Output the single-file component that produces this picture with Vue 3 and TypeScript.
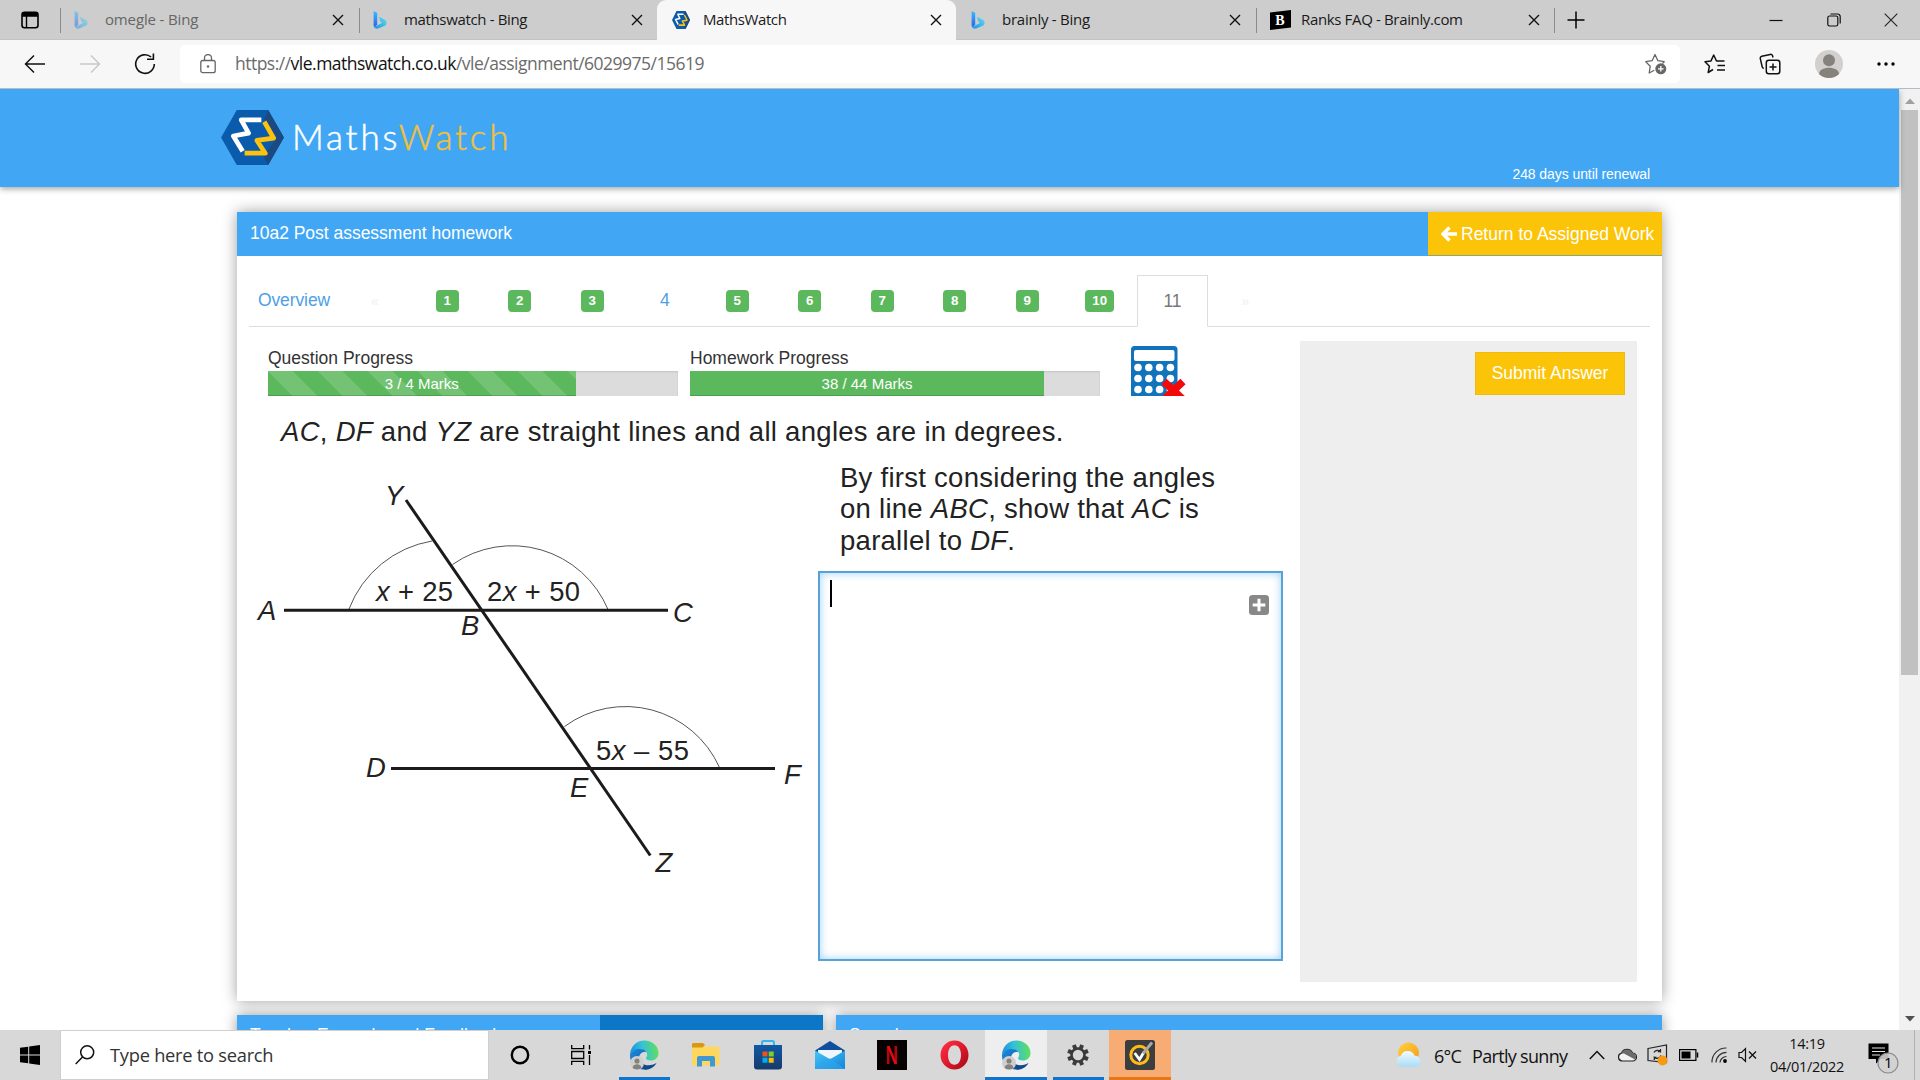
<script setup lang="ts">
interface BrowserTab {
  title: string
  icon: 'bing' | 'mw' | 'brainly'
  active?: boolean
  faded?: boolean
  divider?: boolean
  spacing: number
}

const tabs: BrowserTab[] = [
  { title: 'omegle - Bing', icon: 'bing', faded: true, divider: true, spacing: -0.15 },
  { title: 'mathswatch - Bing', icon: 'bing', divider: true, spacing: -0.35 },
  { title: 'MathsWatch', icon: 'mw', active: true, spacing: -0.4 },
  { title: 'brainly - Bing', icon: 'bing', spacing: -0.25 },
  { title: 'Ranks FAQ - Brainly.com', icon: 'brainly', divider: true, spacing: -0.35 },
]

interface Question {
  n: number
  done: boolean
  current?: boolean
}

const questions: Question[] = Array.from({ length: 11 }, (_, i) => ({
  n: i + 1,
  done: i + 1 !== 4 && i + 1 !== 11,
  current: i + 1 === 11,
}))

const progress = [
  { label: 'Question Progress', got: 3, total: 4, striped: true },
  { label: 'Homework Progress', got: 38, total: 44, striped: false },
]

const keys = [0, 1, 2].flatMap((r) => [0, 1, 2, 3].map((c) => ({ x: 7 + c * 10.8, y: 21.5 + r * 11 })))
const teeth = [0, 45, 90, 135, 180, 225, 270, 315]
</script>

<template>
  <div class="screen">
    <svg class="defs" width="0" height="0">
      <defs>
        <linearGradient id="bingA" x1="0" y1="0" x2="0" y2="1">
          <stop offset="0" stop-color="#37bdff" /><stop offset="1" stop-color="#2a5fe8" />
        </linearGradient>
        <linearGradient id="bingB" x1="0" y1="1" x2="1" y2="0">
          <stop offset="0" stop-color="#1b8ff0" /><stop offset="1" stop-color="#5fe0e8" />
        </linearGradient>
        <linearGradient id="edgeTop" x1="0" y1="0.6" x2="1" y2="0.5">
          <stop offset="0" stop-color="#1a8fdd" /><stop offset="0.45" stop-color="#35c1d8" /><stop offset="1" stop-color="#5fe05a" />
        </linearGradient>
        <linearGradient id="edgeMid" x1="0" y1="0" x2="1" y2="1">
          <stop offset="0" stop-color="#1c8fe0" /><stop offset="1" stop-color="#0c4f9c" />
        </linearGradient>
        <linearGradient id="storeBg" x1="0" y1="0" x2="0" y2="1">
          <stop offset="0" stop-color="#0f5aa8" /><stop offset="1" stop-color="#173a6b" />
        </linearGradient>
        <linearGradient id="mailBg" x1="0" y1="0" x2="1" y2="1">
          <stop offset="0" stop-color="#45c6f7" /><stop offset="1" stop-color="#1483d8" />
        </linearGradient>
        <linearGradient id="operaBg" x1="0" y1="0" x2="1" y2="1">
          <stop offset="0" stop-color="#ff3347" /><stop offset="0.5" stop-color="#e0192d" /><stop offset="1" stop-color="#9c0a14" />
        </linearGradient>
        <linearGradient id="sunBg" x1="0" y1="0" x2="1" y2="1">
          <stop offset="0" stop-color="#ffd23e" /><stop offset="1" stop-color="#f59a1b" />
        </linearGradient>
        <linearGradient id="cloudBg" x1="0" y1="0" x2="0" y2="1">
          <stop offset="0" stop-color="#f2fbff" /><stop offset="1" stop-color="#a9dcf5" />
        </linearGradient>
        <symbol id="edge" viewBox="0 0 30 30">
          <path d="M1 14.5C1.600 6.500 7.500.5 15.300.5 23.500.5 29.500 6.300 29.500 13c0 4.600-3.600 7.600-7.600 7.600-3.200 0-5-1.200-5-2.300 0-.8 1.300-1.400 1.300-3.500 0-3-2.800-5.400-7-5.400-5 0-8.600 2.400-10.200 5.100z" fill="url(#edgeTop)" />
          <path d="M1 14.500c1.600-3.600 5.300-5.600 9.700-5.600 3.300 0 5.500 1.200 6.600 2.900-4.600-.4-7.300 2.600-7.300 6.600 0 5 4 10.100 9.600 10.400-1.500.6-3 .8-4.500.8C7 29.600.4 23 1 14.500z" fill="url(#edgeMid)" />
          <path d="M12 17c-1.300 5 2.400 8.300 7.400 8.300 3.600 0 6.300-1.300 8.200-2.600-2 4.100-6.300 7-11.300 7-5.200-1.600-7.600-8.300-4.300-12.700z" fill="#114a8b" />
        </symbol>
        <symbol id="person" viewBox="0 0 16 16">
          <circle cx="8" cy="8" r="8" fill="#cfcfcf" />
          <circle cx="8" cy="5.800" r="2.900" fill="#85817d" />
          <path d="M3 13.500c0-5.500 10-5.500 10 0-2 2.600-8 2.600-10 0z" fill="#85817d" />
        </symbol>
        <symbol id="mwmark" viewBox="0 0 64 56">
          <path d="M16 0h32l16 28-16 28H16L0 28z" fill="#0a5bab" />
          <path d="M48 0l16 28-16 28-5-9 14-19L44 9z" fill="#1c4a80" />
          <path d="M41 10H20.500L28 23.500 12.500 26.500 22 42" fill="none" stroke="#fff" stroke-width="4.800" stroke-linejoin="round" />
          <path d="M44 12L53.500 28.600 36.500 31 45 44H24" fill="none" stroke="#fdc10e" stroke-width="4.800" stroke-linejoin="round" />
        </symbol>
      </defs>
    </svg>

    <!-- Tab strip -->
    <div class="tabstrip">
      <div class="tabmenu">
        <svg width="18" height="18" viewBox="0 0 18 18"><rect x="1" y="1.200" width="16" height="15.600" rx="2.500" fill="none" stroke="#000" stroke-width="1.600" /><path d="M1 5.800V3.500A2.500 2.500 0 0 1 3.500 1h11A2.500 2.500 0 0 1 17 3.500v2.300z" /><path d="M5.500 5v12" stroke="#000" stroke-width="1.400" /></svg>
      </div>
      <div v-for="t in tabs" :key="t.title" class="tab" :class="{ active: t.active, divided: t.divider, faded: t.faded }">
        <span class="favicon">
          <svg v-if="t.icon === 'bing'" width="14" height="18" viewBox="0 0 14 18">
            <path d="M.6 0l3.600 1.700v11.600L1.900 16.500.6 14.700z" fill="url(#bingA)" />
            <path d="M5.800 5.800l6.400 3.100c1.800 1.200 1.900 4 .2 5.500l-7.200 3.200c-1.900.6-4.300-.5-4.600-2.900 1.200 1 2.500.5 3.600-.2l5-2.800-1.700-1z" fill="url(#bingB)" />
          </svg>
          <svg v-else-if="t.icon === 'mw'" width="18" height="18" viewBox="0 0 64 56" preserveAspectRatio="none"><use href="#mwmark" /></svg>
          <svg v-else width="21" height="20" viewBox="0 0 21 20"><path d="M0 2.500L21 0v17.500L0 20z" /><text x="5.200" y="15" class="brainly">B</text></svg>
        </span>
        <span class="tabtitle" :style="{ letterSpacing: t.spacing + 'px' }">{{ t.title }}</span>
        <svg class="close" width="12" height="12" viewBox="0 0 12 12"><path d="M1 1l10 10M11 1L1 11" stroke="#111" stroke-width="1.400" /></svg>
      </div>
      <div class="newtab"><svg width="18" height="18" viewBox="0 0 18 18"><path d="M9 .5v17M.5 9h17" stroke="#000" stroke-width="1.500" /></svg></div>
      <div class="winctl">
        <svg width="14" height="14" viewBox="0 0 14 14"><path d="M.5 7.500h13" stroke="#111" stroke-width="1.200" /></svg>
        <svg width="14" height="14" viewBox="0 0 14 14"><rect x=".8" y="3" width="10" height="10" rx="1.800" fill="none" stroke="#111" stroke-width="1.200" /><path d="M3.500 1h7A2.600 2.600 0 0 1 13.200 3.600V10.500" fill="none" stroke="#111" stroke-width="1.200" /></svg>
        <svg width="14" height="14" viewBox="0 0 14 14"><path d="M.7.700l12.600 12.600M13.300.700L.7 13.300" stroke="#222" stroke-width="1.100" /></svg>
      </div>
    </div>

    <!-- Toolbar -->
    <div class="toolbar">
      <div class="nav">
        <svg width="22" height="20" viewBox="0 0 22 20"><path d="M21 10H2M10 1.500L1.500 10l8.500 8.500" fill="none" stroke="#111" stroke-width="1.500" /></svg>
        <svg width="22" height="20" viewBox="0 0 22 20"><path d="M1 10h19M12 1.500l8.500 8.500-8.500 8.500" fill="none" stroke="#c9c9c9" stroke-width="1.500" /></svg>
        <svg width="22" height="22" viewBox="0 0 22 22"><path d="M20.300 11a9.300 9.300 0 1 1-3.200-7" fill="none" stroke="#111" stroke-width="1.600" /><path d="M13 6.200h6.400V.5" fill="none" stroke="#111" stroke-width="1.600" /></svg>
      </div>
      <div class="address">
        <svg width="16" height="20" viewBox="0 0 16 20"><rect x=".8" y="6.500" width="14.400" height="12.200" rx="2" fill="none" stroke="#666" stroke-width="1.300" /><path d="M4.500 6.500V4a3.500 3.500 0 0 1 7 0v2.500" fill="none" stroke="#666" stroke-width="1.300" /><circle cx="8" cy="12.500" r="1.200" fill="#666" /></svg>
        <span class="url">https://<b>vle.mathswatch.co.uk</b>/vle/assignment/6029975/15619</span>
        <svg class="addstar" width="22" height="22" viewBox="0 0 22 22"><path d="M9.300 17.200L4.200 20l1-6.700L.8 8.700l6.300-1L10 1.500l2.900 6.200 6.300 1-1.700 1.800" fill="none" stroke="#666" stroke-width="1.300" stroke-linejoin="round" /><circle cx="15.800" cy="15.800" r="5.500" fill="#666" /><path d="M15.800 13v5.600M13 15.800h5.600" stroke="#fff" stroke-width="1.300" /></svg>
      </div>
      <div class="tools">
        <svg width="22" height="20" viewBox="0 0 22 20"><path d="M9 15.500L4.200 18.500l1.200-6.300L1 7.700l6-.8L9.700 1l2.800 6h8M13.500 11.500h7.500M13 16h8" fill="none" stroke="#111" stroke-width="1.500" stroke-linejoin="round" /></svg>
        <svg width="22" height="22" viewBox="0 0 22 22"><rect x="7.300" y="7.300" width="13.500" height="13.500" rx="2.500" fill="none" stroke="#111" stroke-width="1.500" /><path d="M14 10.500v7M10.500 14h7" stroke="#111" stroke-width="1.500" /><path d="M14 4.500l-.4-1.600a2 2 0 0 0-2.400-1.500L2.800 3.300A2 2 0 0 0 1.300 5.700l1.900 8.100a2 2 0 0 0 1.700 1.500" fill="none" stroke="#111" stroke-width="1.500" /></svg>
        <svg width="28" height="28" viewBox="0 0 28 28"><circle cx="14" cy="14" r="14" fill="#d2d0ce" /><circle cx="14" cy="10.300" r="6" fill="#85817d" /><path d="M4 24c0-8.500 20-8.500 20 0-5 5.300-15 5.300-20 0z" fill="#85817d" /></svg>
        <svg width="18" height="4" viewBox="0 0 18 4"><circle cx="2" cy="2" r="1.700" /><circle cx="9" cy="2" r="1.700" /><circle cx="16" cy="2" r="1.700" /></svg>
      </div>
    </div>

    <!-- Page -->
    <div class="viewport">
      <div class="page">
        <header class="site">
          <div class="logo">
            <svg width="63" height="55" viewBox="0 0 64 56"><use href="#mwmark" /></svg>
            <span class="wordmark">Maths<i>Watch</i></span>
          </div>
          <span class="renewal">248 days until renewal</span>
        </header>

        <section class="card">
          <div class="cardhead">
            <span class="cardtitle">10a2 Post assessment homework</span>
            <button class="return">
              <svg width="16" height="16" viewBox="0 0 16 16"><path d="M8.500 1.500L2 8l6.500 6.500M2.500 8H16" fill="none" stroke="#fff" stroke-width="3.400" /></svg>
              <span>Return to Assigned Work</span>
            </button>
          </div>

          <nav class="qnav">
            <a class="overview">Overview</a>
            <a class="step">«</a>
            <a v-for="q in questions" :key="q.n" class="q" :class="{ current: q.current }">
              <span :class="{ badge: q.done }">{{ q.n }}</span>
            </a>
            <a class="step next">»</a>
          </nav>

          <div class="body">
            <div class="work">
              <div class="progressrow">
                <div v-for="p in progress" :key="p.label" class="progress">
                  <label>{{ p.label }}</label>
                  <div class="bar">
                    <div class="fill" :class="{ striped: p.striped }" :style="{ width: (p.got / p.total) * 100 + '%' }">{{ p.got }} / {{ p.total }} Marks</div>
                  </div>
                </div>
                <svg class="calc" width="56" height="50" viewBox="0 0 56 50">
                  <rect width="46.500" height="54" rx="3.500" fill="#1273bd" />
                  <rect x="3" y="4" width="40.500" height="11" rx="2" fill="#fff" />
                  <circle v-for="(k, i) in keys" :key="i" :cx="k.x" :cy="k.y" r="3.800" fill="#fff" />
                  <path d="M33 35.500l19 18M52 35.500l-19 18" stroke="#f40808" stroke-width="7.500" />
                </svg>
              </div>

              <p class="statement"><em>AC</em>, <em>DF</em> and <em>YZ</em> are straight lines and all angles are in degrees.</p>

              <div class="split">
                <svg class="diagram" width="569" height="440" viewBox="249 448 569 440">
                  <g fill="none" stroke="#555" stroke-width="1">
                    <path d="M349 609A108 108 0 0 1 432 541" />
                    <path d="M452.500 564.500A104 104 0 0 1 608 609.500" />
                    <path d="M564.500 726.500A103 103 0 0 1 719.500 767.500" />
                  </g>
                  <g stroke="#1c1a1b" stroke-width="3">
                    <path d="M284 610.300H668M391 768.500H775" />
                    <path d="M406 500L650.300 855.500" />
                  </g>
                  <g class="lbl">
                    <text x="258" y="620">A</text><text x="673" y="622">C</text><text x="461" y="635.300">B</text>
                    <text x="385" y="505">Y</text><text x="655.500" y="872.300">Z</text><text x="366" y="777.300">D</text>
                    <text x="784" y="784">F</text><text x="570" y="796.700">E</text>
                    <text x="376" y="601" textLength="77">x<tspan class="up"> + 25</tspan></text>
                    <text x="487" y="601" textLength="93"><tspan class="up">2</tspan>x<tspan class="up"> + 50</tspan></text>
                    <text x="596" y="760" textLength="93"><tspan class="up">5</tspan>x<tspan class="up"> – 55</tspan></text>
                  </g>
                </svg>
                <div class="answercol">
                  <p class="prompt">By first considering the angles<br />on line <em>ABC</em>, show that <em>AC</em> is<br />parallel to <em>DF</em>.</p>
                  <div class="answer">
                    <span class="caret"></span>
                    <svg class="plus" width="20" height="20" viewBox="0 0 20 20"><rect width="20" height="20" rx="3.500" fill="#888" /><path d="M10 3.700v12.600M3.700 10h12.600" stroke="#fff" stroke-width="3" /></svg>
                  </div>
                </div>
              </div>
            </div>
            <aside class="side"><button class="submit">Submit Answer</button></aside>
          </div>
        </section>

        <div class="lower">
          <div class="lowcard left"><span>Teacher Example and Feedback</span><div class="dark"></div></div>
          <div class="lowcard right"><span>Search</span></div>
        </div>
      </div>
      <div class="scroll">
        <svg width="10" height="6" viewBox="0 0 10 6"><path d="M0 6l5-5.500L10 6z" fill="#a0a0a0" /></svg>
        <div class="thumb"></div>
        <svg class="down" width="10" height="6" viewBox="0 0 10 6"><path d="M0 0l5 5.500L10 0z" fill="#505050" /></svg>
      </div>
    </div>

    <!-- Taskbar -->
    <div class="taskbar">
      <div class="start"><svg width="20" height="20" viewBox="0 0 20 20"><path d="M0 2.800l8.200-1.100v7.800H0zM9.200 1.500L20 0v9.500H9.200zM0 10.500h8.200v7.800L0 17.200zM9.200 10.500H20V20L9.200 18.500z" /></svg></div>
      <div class="search">
        <svg width="20" height="20" viewBox="0 0 20 20"><circle cx="12.200" cy="7.300" r="6.500" fill="none" stroke="#111" stroke-width="1.500" /><path d="M7.500 12L.7 19" stroke="#111" stroke-width="1.500" /></svg>
        <span>Type here to search</span>
      </div>
      <div class="app"><svg width="20" height="20" viewBox="0 0 20 20"><circle cx="10" cy="10" r="8.200" fill="none" stroke="#000" stroke-width="2.400" /></svg></div>
      <div class="app taskview"><svg width="20" height="20" viewBox="0 0 20 20"><path d="M.7 0v3.700h12V0M.7 20v-3.700h12V20M18.500 0v4.500M18.500 10v10" fill="none" stroke="#000" stroke-width="1.300" /><path d="M.7 6.500h12v7H.7z" fill="none" stroke="#000" stroke-width="1.300" /><rect x="17" y="6" width="3" height="3" /></svg></div>
      <div class="app running">
        <svg width="32" height="32" viewBox="0 0 32 32"><use href="#edge" x="1" y="1" width="30" height="30" /><use href="#person" x="2" y="17" width="14" height="14" /></svg>
      </div>
      <div class="app"><svg width="28" height="24" viewBox="0 0 28 24"><path d="M0 1.500A1.500 1.500 0 0 1 1.500 0h9.500l2 3.500h13A1.500 1.500 0 0 1 27.500 5v17.500H0z" fill="#ffd75e" /><path d="M0 4.500V1.500A1.500 1.500 0 0 1 1.500 0h9.500l2 2-2.500 2.500z" fill="#d9980f" /><path d="M5 23.500V15a2 2 0 0 1 2-2h14a2 2 0 0 1 2 2v8.500h-5V18h-8v5.500z" fill="#3f97d3" /></svg></div>
      <div class="app"><svg width="30" height="30" viewBox="0 0 30 30"><path d="M9 6V2.500A1.500 1.500 0 0 1 10.500 1h9A1.500 1.500 0 0 1 21 2.500V6" fill="none" stroke="#35b5ec" stroke-width="2" /><path d="M1 5h28v21.500a3 3 0 0 1-3 3H4a3 3 0 0 1-3-3z" fill="url(#storeBg)" /><path d="M9.500 11.500h5v5h-5z" fill="#f1511b" /><path d="M15.700 11.500h5v5h-5z" fill="#80cc28" /><path d="M9.500 17.700h5v5h-5z" fill="#00adef" /><path d="M15.700 17.700h5v5h-5z" fill="#fbbc09" /></svg></div>
      <div class="app"><svg width="30" height="28" viewBox="0 0 30 28"><path d="M0 9.500L15 0l15 9.500-4 5H4z" fill="#0e4f9e" /><path d="M3 9h24v9H3z" fill="#eef6fb" /><path d="M0 9.500l15 8.700 15-8.700V28H0z" fill="url(#mailBg)" /><path d="M0 28l15-11 15 11z" fill="#2fa6ec" opacity=".6" /></svg></div>
      <div class="app"><svg width="30" height="30" viewBox="0 0 30 30"><rect width="30" height="30" fill="#060000" /><path d="M11.200 6v18M18.800 6v18" stroke="#b1060f" stroke-width="2.600" /><path d="M9.900 6h2.700l7.500 18h-2.700z" fill="#e50914" /></svg></div>
      <div class="app"><svg width="29" height="30" viewBox="0 0 29 30"><path fill-rule="evenodd" d="M14.500.5a14 14.500 0 1 0 0 29 14 14.500 0 1 0 0-29zM14.500 5.300c4 0 6.500 4 6.500 9.700s-2.500 9.700-6.500 9.700S8 20.700 8 15s2.500-9.700 6.500-9.700z" fill="url(#operaBg)" /></svg></div>
      <div class="app front">
        <svg width="32" height="32" viewBox="0 0 32 32"><use href="#edge" x="1" y="1" width="30" height="30" /><use href="#person" x="2" y="17" width="14" height="14" /></svg>
      </div>
      <div class="app running">
        <svg width="22" height="22" viewBox="-11 -11 22 22"><circle r="6.500" fill="none" stroke="#3b3b3b" stroke-width="2.600" /><rect v-for="a in teeth" :key="a" x="-2" y="-10.800" width="4" height="4" fill="#3b3b3b" :transform="`rotate(${a + 22.5})`" /></svg>
      </div>
      <div class="app alert">
        <svg width="30" height="30" viewBox="0 0 30 30"><rect width="30" height="30" rx="2.500" fill="#3c3d3f" /><circle cx="14.500" cy="15" r="8.700" fill="none" stroke="#fdbb18" stroke-width="3" /><path d="M9.700 13l4.800 6.500L19 12" fill="none" stroke="#fff" stroke-width="2.800" /><path d="M18 13.500L27 2.500" stroke="#a9a9a9" stroke-width="2.800" /></svg>
      </div>

      <div class="tray">
        <svg class="weather" width="28" height="26" viewBox="0 0 28 26"><circle cx="13.500" cy="11" r="10.500" fill="url(#sunBg)" /><path d="M6.500 25a6 6 0 0 1-.6-11.500 7.500 7.500 0 0 1 13.800.2A5.800 5.800 0 0 1 21.500 25z" fill="url(#cloudBg)" /></svg>
        <span class="temp">6°C</span><span class="sky">Partly sunny</span>
        <svg class="chev" width="16" height="10" viewBox="0 0 16 10"><path d="M.8 9L8 1.500 15.200 9" fill="none" stroke="#111" stroke-width="1.500" /></svg>
        <svg class="onedrive" width="20" height="14" viewBox="0 0 20 14"><path d="M5 13a4 4 0 0 1-.6-7.800A6 6 0 0 1 15.500 5a4 4 0 0 1 0 8z" fill="#f2f2f2" stroke="#222" stroke-width="1.200" /><path d="M2.500 6.500a7 7 0 0 1 4.500-1L18 11.500a3.800 3.800 0 0 0-2.500-6.400A6 6 0 0 0 4.400 5.200z" fill="#6b6b6b" /></svg>
        <svg class="sync" width="21" height="22" viewBox="0 0 21 22"><path d="M1 4.500L19.500 1v17.500L1 16.500z" fill="none" stroke="#222" stroke-width="1.200" /><path d="M7 8.500a4 4 0 0 1 6.500-1V5M13.500 7.700h-2.700M13.800 11.500a4 4 0 0 1-6.500 1.800V16M7 13.300h2.500" fill="none" stroke="#222" stroke-width="1.200" /><circle cx="15.500" cy="16.500" r="5" fill="#f59a12" /></svg>
        <svg class="battery" width="20" height="12" viewBox="0 0 20 12"><rect x=".6" y=".6" width="16.300" height="10.800" fill="none" stroke="#000" stroke-width="1.200" /><rect x="2.500" y="2.500" width="9" height="7" /><path d="M18.500 3.500v5" stroke="#000" stroke-width="1.500" /></svg>
        <svg class="wifi" width="17" height="16" viewBox="0 0 17 16"><g fill="none" stroke="#333" stroke-width="1.200"><path d="M1 15.500A14 14 0 0 1 15.500 1" /><path d="M5 15.500A10.500 10.500 0 0 1 15.500 5.300" /><path d="M9 15.500a6.500 6.500 0 0 1 6.500-6" /></g><circle cx="14" cy="14" r="1.900" /></svg>
        <svg class="vol" width="19" height="16" viewBox="0 0 19 16"><path d="M1 5.500h2.500L7.500 1.700v12.600L3.500 10.500H1z" fill="none" stroke="#111" stroke-width="1.200" /><path d="M11 4.500l7 7M18 4.500l-7 7" stroke="#111" stroke-width="1.300" /></svg>
        <div class="clock"><span>14:19</span><span>04/01/2022</span></div>
        <svg class="notif" width="32" height="32" viewBox="0 0 32 32"><path d="M.5 1.500h20v15.500H13l-5 4.500V17H.5z" /><path d="M4 6h13M4 9.500h13M4 13h8" stroke="#e6e6e6" stroke-width="1.200" /><circle cx="20" cy="21" r="10" fill="#d2d2d2" fill-opacity=".9" stroke="#8a8a8a" stroke-width="1.200" /><text x="16" y="26" class="count">1</text></svg>
      </div>
    </div>
  </div>
</template>

<style>
body { margin: 0; overflow: hidden; }
</style>

<style scoped>
.screen { width: 1920px; height: 1080px; display: flex; flex-direction: column; overflow: hidden; background: #fff; font-family: "Liberation Sans", Arial, sans-serif; }
.defs { position: absolute; }
svg { display: block; flex: none; }
p { margin: 0; }
button { border: 0; font: inherit; color: inherit; padding: 0; }

.tabstrip { height: 40px; flex: none; background: #cdcdcd; box-shadow: inset 0 -1px #c3c3c3; display: flex; font-family: "Open Sans", "Noto Sans", sans-serif; }
.tabmenu { width: 59px; flex: none; display: flex; align-items: center; padding-left: 21px; box-sizing: border-box; }
.tab { width: 299px; height: 40px; flex: none; box-sizing: border-box; padding: 0 14px 0 15px; display: flex; align-items: center; font-size: 15px; color: #1a1a1a; }
.tab.divided { background: linear-gradient(#8b8b8b, #8b8b8b) 1px 8px / 1px 25px no-repeat; }
.tab.active { background: #f7f7f7; border-radius: 9px 9px 0 0; }
.tab.faded .favicon { opacity: .5; }
.tab.faded .tabtitle { color: #666; }
.favicon { width: 31px; flex: none; }
.tabtitle { flex: 1; white-space: nowrap; line-height: 20px; padding-bottom: 2px; }
.brainly { font: bold 14px "Liberation Serif", serif; fill: #fff; }
.newtab { display: flex; align-items: center; padding: 0 0 0 13px; background: linear-gradient(#8b8b8b, #8b8b8b) 0 8px / 1px 25px no-repeat; }
.winctl { margin-left: auto; display: flex; align-items: center; gap: 43.500px; padding-right: 22px; }

.toolbar { height: 48px; flex: none; background: #f7f7f7; border-bottom: 1px solid #b3bcc4; display: flex; align-items: center; }
.nav { width: 180px; flex: none; display: flex; gap: 33px; padding-left: 24px; box-sizing: border-box; align-items: center; }
.address { width: 1500px; height: 38px; flex: none; box-sizing: border-box; background: #fff; border-radius: 5px; display: flex; align-items: center; padding: 0 13px 0 20px; }
.url { margin-left: 19px; font: 17.5px/24px "Open Sans", "Noto Sans", sans-serif; letter-spacing: -.51px; color: #6b6b6b; padding-bottom: 2px; }
.url b { font-weight: 400; color: #111; }
.addstar { margin-left: auto; }
.tools { flex: 1; display: flex; align-items: center; padding-left: 24px; }
.tools svg:nth-child(2) { margin-left: 33px; }
.tools svg:nth-child(3) { margin-left: 34px; }
.tools svg:nth-child(4) { margin-left: 34px; }

.viewport { height: 941px; flex: none; display: flex; overflow: hidden; }
.page { width: 1899px; flex: none; }
.site { height: 98px; background: #41a7f5; box-shadow: 0 2px 6px rgba(0, 0, 0, .35); display: flex; justify-content: space-between; padding: 0 249px 0 221px; position: relative; }
.logo { display: flex; align-items: flex-start; padding-top: 21px; }
.wordmark { font: 300 35px/42px Lato, sans-serif; color: #fff; -webkit-text-stroke: .5px; margin: 5px 0 0 8px; letter-spacing: 2.850px; }
.wordmark i { font-style: normal; color: #f0c03a; }
.renewal { align-self: flex-end; font-size: 14px; line-height: 16px; color: #fff; margin-bottom: 5px; letter-spacing: -.080px; }

.card { width: 1425px; height: 789px; margin: 25px 0 0 237px; background: #fff; box-shadow: 0 0 14px rgba(0, 0, 0, .38); box-sizing: border-box; }
.cardhead { height: 44px; background: #41a7f5; display: flex; justify-content: space-between; }
.cardtitle { font-size: 17.5px; line-height: 20px; color: #fff; padding: 11px 0 0 13px; letter-spacing: -.020px; }
.return { width: 234px; height: 44px; background: #fcc408; box-shadow: inset 0 -1px #8ba77a; color: #fff; font-size: 17.500px; display: flex; align-items: center; padding-left: 13px; box-sizing: border-box; white-space: nowrap; gap: 4px; }
.qnav { height: 71px; margin: 0 12px; box-sizing: border-box; border-bottom: 1px solid #ddd; display: flex; align-items: flex-end; font-size: 17.500px; }
.qnav a { height: 51px; box-sizing: border-box; display: flex; align-items: center; justify-content: center; color: #4f9fe6; }
.qnav .overview { width: 90px; letter-spacing: -.1px; }
.qnav .step { width: 72px; color: #f0f0f0; font-size: 14px; }
.qnav .next { width: 75px; }
.qnav .q { width: 72.5px; }
.qnav .q.current { width: 71px; margin: 0 0 -1px 1px; height: 52px; border: 1px solid #ddd; border-bottom-color: #fff; background: #fff; color: #777; }
.badge { height: 22px; min-width: 23px; box-sizing: border-box; padding: 0 7px; border-radius: 4px; background: #5cb85c; color: #fff; font-weight: 700; font-size: 13.300px; line-height: 21px; text-align: center; }
.body { display: flex; }
.work { width: 1032px; margin-left: 31px; flex: none; }
.progressrow { display: flex; padding-top: 19px; height: 50px; }
.progress { width: 410px; margin-right: 12px; color: #333; }
.progress label { display: block; height: 25px; line-height: 25px; font-size: 17.5px; }
.bar { height: 25px; background: #dcdcdc; box-shadow: inset 0 1px 2px rgba(0, 0, 0, .12); }
.fill { height: 25px; box-sizing: border-box; background-color: #5cb85c; box-shadow: inset 0 -1px rgba(0, 0, 0, .15); color: #fff; font-size: 15px; line-height: 26px; text-align: center; }
.fill.striped { background-image: linear-gradient(45deg, rgba(255, 255, 255, .15) 25%, transparent 25%, transparent 50%, rgba(255, 255, 255, .15) 50%, rgba(255, 255, 255, .15) 75%, transparent 75%, transparent); background-size: 50px 50px; }
.calc { margin-left: 19px; }
.statement { font-size: 27.500px; line-height: 32px; letter-spacing: .290px; color: #222; margin: 20px 0 0 13px; white-space: nowrap; }
.split { display: flex; margin-left: -19px; }
.diagram { overflow: visible; }
.lbl { font: italic 27.400px "Liberation Sans", Arial, sans-serif; fill: #222; }
.up { font-style: normal; }
.answercol { width: 465px; }
.prompt { font-size: 27.500px; line-height: 31.300px; letter-spacing: .270px; color: #222; padding: 14px 0 0 22px; white-space: nowrap; }
.answer { margin-top: 15px; width: 465px; height: 390px; box-sizing: border-box; border: 2px solid #55a3d8; box-shadow: inset 0 0 8px rgba(82, 168, 236, .55); display: flex; justify-content: space-between; padding: 7px 12px 0 10px; }
.caret { width: 2px; height: 27px; background: #000; }
.plus { margin-top: 15px; }
.side { width: 337px; height: 641px; margin-top: 14px; background: #eee; display: flex; justify-content: flex-end; align-items: flex-start; padding: 11px 12px 0 0; box-sizing: border-box; }
.submit { width: 150px; height: 43px; background: #fcc408; box-shadow: inset 0 0 0 1px #efbb10; color: #fff; font-size: 17.500px; }
.lower { display: flex; gap: 13px; margin: 14px 0 0 237px; }
.lowcard { height: 44px; background: #41a7f5; color: #fff; font-size: 17.500px; line-height: 20px; display: flex; justify-content: space-between; box-shadow: 0 0 14px rgba(0, 0, 0, .4); }
.lowcard span { padding: 10px 0 0 13px; }
.left { width: 586px; }
.right { width: 826px; }
.dark { width: 223px; background: #0b77c6; }

.scroll { width: 21px; background: #f1f1f1; display: flex; flex-direction: column; align-items: center; padding: 9px 0 8px; box-sizing: border-box; }
.thumb { width: 17px; height: 565px; background: #c1c1c1; margin-top: 6px; }
.down { margin-top: auto; }

.taskbar { height: 50px; flex: none; background: #d8d8d8; display: flex; font-family: "Open Sans", "Noto Sans", sans-serif; position: relative; }
.start { width: 60px; display: flex; align-items: center; justify-content: center; flex: none; }
.search { width: 429px; flex: none; box-sizing: border-box; background: #fff; border: 1px solid #cfcfcf; display: flex; align-items: center; padding-left: 14px; font-size: 18.300px; letter-spacing: -.260px; color: #333; gap: 15px; }
.search span { padding-bottom: 2px; }
.app { width: 62px; flex: none; display: flex; align-items: center; justify-content: center; }
.taskview { padding-right: 3px; box-sizing: border-box; }
.running { background: linear-gradient(#0f74cc, #0f74cc) 50% 100% / 51px 3px no-repeat; }
.front { background: linear-gradient(#0f74cc, #0f74cc) 0 100% / 62px 3px no-repeat, #eee; }
.alert { background: linear-gradient(#e87614, #e87614) 0 100% / 62px 3px no-repeat, #f6ac72; }
.tray { margin-left: auto; width: 525px; display: flex; align-items: center; color: #111; box-sizing: border-box; background: linear-gradient(#b0b0b0, #b0b0b0) 519px 0 / 1px 50px no-repeat; }
.temp { font-size: 18px; letter-spacing: -.8px; width: 38px; margin-left: 11px; padding-top: 1px; }
.sky { font-size: 18px; letter-spacing: -.680px; white-space: nowrap; width: 117px; padding-top: 1px; }
.onedrive { margin-left: 12px; }
.sync { margin-left: 10px; }
.battery { margin-left: 11px; }
.wifi { margin-left: 12px; }
.vol { margin-left: 10px; }
.clock { width: 84px; margin-left: 8px; display: flex; flex-direction: column; align-items: center; font-size: 14.500px; line-height: 23px; letter-spacing: -.3px; padding-bottom: 1px; }
.notif { margin: 6px 0 0 19px; }
.count { font: 15px "Open Sans", sans-serif; }
</style>
